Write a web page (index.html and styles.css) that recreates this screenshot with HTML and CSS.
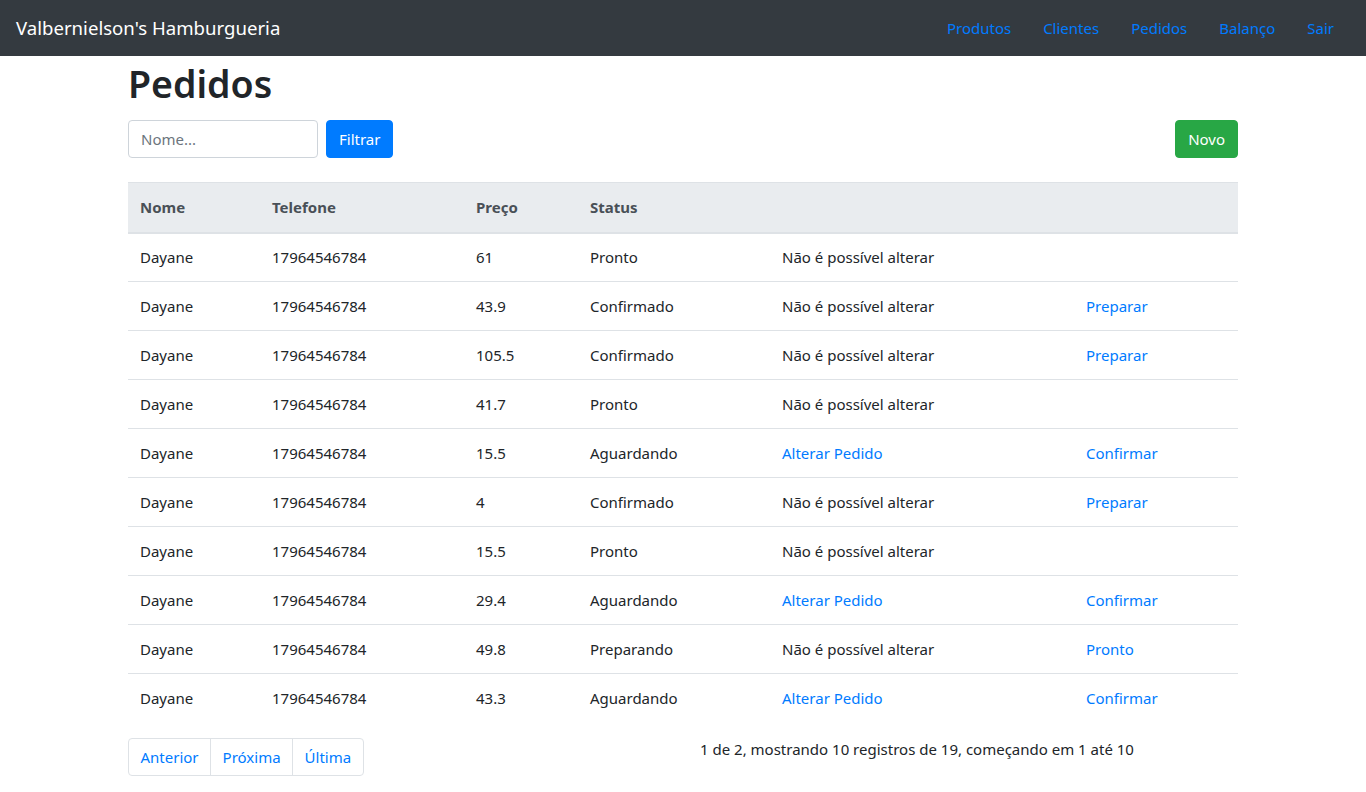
FILE: index.html
```html
<!DOCTYPE html>
<html lang="pt-BR">
<head>
<meta charset="utf-8">
<title>Pedidos</title>
<link rel="stylesheet" href="styles.css">
</head>
<body>
<nav class="navbar">
  <a class="brand" href="#">Valbernielson's Hamburgueria</a>
  <ul class="nav">
    <li><a href="#">Produtos</a></li>
    <li><a href="#">Clientes</a></li>
    <li><a href="#">Pedidos</a></li>
    <li><a href="#">Balanço</a></li>
    <li><a href="#">Sair</a></li>
  </ul>
</nav>
<main class="container">
  <h1 class="title">Pedidos</h1>
  <div class="toolbar">
    <form class="filter">
      <input class="input" type="text" placeholder="Nome...">
      <button class="btn btn-primary" type="button">Filtrar</button>
    </form>
    <button class="btn btn-success" type="button">Novo</button>
  </div>
  <table class="table">
    <colgroup>
      <col class="c1"><col class="c2"><col class="c3"><col class="c4"><col class="c5"><col class="c6">
    </colgroup>
    <thead>
      <tr><th>Nome</th><th>Telefone</th><th>Preço</th><th>Status</th><th></th><th></th></tr>
    </thead>
    <tbody>
      <tr><td>Dayane</td><td>17964546784</td><td>61</td><td>Pronto</td><td>Não é possível alterar</td><td></td></tr>
      <tr><td>Dayane</td><td>17964546784</td><td>43.9</td><td>Confirmado</td><td>Não é possível alterar</td><td><a href="#">Preparar</a></td></tr>
      <tr><td>Dayane</td><td>17964546784</td><td>105.5</td><td>Confirmado</td><td>Não é possível alterar</td><td><a href="#">Preparar</a></td></tr>
      <tr><td>Dayane</td><td>17964546784</td><td>41.7</td><td>Pronto</td><td>Não é possível alterar</td><td></td></tr>
      <tr><td>Dayane</td><td>17964546784</td><td>15.5</td><td>Aguardando</td><td><a href="#">Alterar Pedido</a></td><td><a href="#">Confirmar</a></td></tr>
      <tr><td>Dayane</td><td>17964546784</td><td>4</td><td>Confirmado</td><td>Não é possível alterar</td><td><a href="#">Preparar</a></td></tr>
      <tr><td>Dayane</td><td>17964546784</td><td>15.5</td><td>Pronto</td><td>Não é possível alterar</td><td></td></tr>
      <tr><td>Dayane</td><td>17964546784</td><td>29.4</td><td>Aguardando</td><td><a href="#">Alterar Pedido</a></td><td><a href="#">Confirmar</a></td></tr>
      <tr><td>Dayane</td><td>17964546784</td><td>49.8</td><td>Preparando</td><td>Não é possível alterar</td><td><a href="#">Pronto</a></td></tr>
      <tr><td>Dayane</td><td>17964546784</td><td>43.3</td><td>Aguardando</td><td><a href="#">Alterar Pedido</a></td><td><a href="#">Confirmar</a></td></tr>
    </tbody>
  </table>
  <div class="footer-row">
    <ul class="pagination">
      <li><a href="#">Anterior</a></li>
      <li><a href="#">Próxima</a></li>
      <li><a href="#">Última</a></li>
    </ul>
    <p class="info">1 de 2, mostrando 10 registros de 19, começando em 1 até 10</p>
  </div>
</main>
</body>
</html>
```
FILE: styles.css
```css
* { box-sizing: border-box; }
html, body { margin: 0; padding: 0; }
body {
  font-family: "Noto Sans", "Open Sans", "Liberation Sans", sans-serif;
  font-size: 15px;
  line-height: 1.5;
  color: #212529;
  background: #fff;
}
a { color: #007bff; text-decoration: none; }

.navbar {
  height: 56px;
  background: #343a40;
  display: flex;
  align-items: center;
  justify-content: space-between;
  padding: 0 16px;
}
.brand { color: #fff; font-size: 18.6px; }
.nav { list-style: none; margin: 0; padding: 0; display: flex; }
.nav a { display: block; padding: 8px 16px; font-size: 15px; }
.nav li:first-child a { padding-left: 18px; }

.container { width: 1110px; margin: 0 auto; }
.title {
  font-size: 37.5px;
  font-weight: 600;
  line-height: 48px;
  margin: 4px 0 12px;
}
.toolbar { display: flex; justify-content: space-between; align-items: center; margin-bottom: 24px; }
.filter { display: flex; gap: 8px; margin: 0; }
.input {
  width: 190px; height: 38px;
  border: 1px solid #ced4da; border-radius: 4px;
  padding: 6px 12px;
  font: inherit; color: #495057;
}
.input::placeholder { color: #6c757d; }
.btn {
  height: 38px; padding: 6px 12px;
  border: 1px solid transparent; border-radius: 4px;
  font: inherit; color: #fff; cursor: pointer;
}
.btn-primary { background: #007bff; border-color: #007bff; }
.btn-success { background: #28a745; border-color: #28a745; }

.table { width: 100%; border-collapse: collapse; margin-bottom: 15px; table-layout: fixed; }
.c1 { width: 132px; } .c2 { width: 204px; } .c3 { width: 114px; }
.c4 { width: 192px; } .c5 { width: 304px; } .c6 { width: 164px; }
.table th, .table td { padding: 13px 12px 11px; text-align: left; vertical-align: top; border-top: 1px solid #dee2e6; }
.table thead th {
  background: #e9ecef; color: #495057; font-weight: 700;
  border-bottom: 2px solid #dee2e6;
  padding: 13px 12px 11px;
  height: 50px;
}
.table td { height: 49px; }
.table tbody tr:first-child td { padding-top: 12px; padding-bottom: 12px; }

.footer-row { display: grid; grid-template-columns: 468px 1fr; }
.pagination { list-style: none; margin: 0; padding: 0; display: flex; }
.pagination a {
  display: block; padding: 6px 11.5px; line-height: 24px;
  border: 1px solid #dee2e6; margin-left: -1px;
}
.pagination li:first-child a { margin-left: 0; border-radius: 4px 0 0 4px; }
.pagination li:last-child a { border-radius: 0 4px 4px 0; }
.info { margin: 0; text-align: center; }
```
